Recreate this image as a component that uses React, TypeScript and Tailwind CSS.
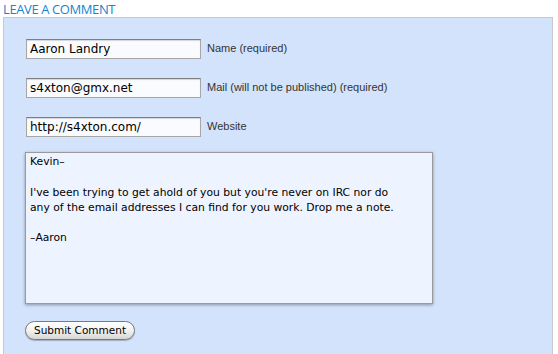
import React from "react";

export default function App() {
  const inputCls =
    "w-[175px] h-[20px] bg-[#f9fbff] border border-[#a6a6a6] border-t-[#7e7e7e] px-[3px] text-[12px] text-black outline-none shadow-[inset_0_1px_1px_rgba(0,0,0,0.15)] font-['DejaVu_Sans',sans-serif]";
  const labelCls = "text-[11px] text-[#333] ml-[6px]";
  const rows = [
    ["Aaron Landry", "Name (required)"],
    ["s4xton@gmx.net", "Mail (will not be published) (required)"],
    ["http://s4xton.com/", "Website"],
  ];
  return (
    <div className="w-[558px] h-[354px] bg-white overflow-hidden">
      <div className="pl-[3px] pt-[2px] h-[17px] text-[13px] leading-[15px] font-medium text-[#1584d2] tracking-[-0.4px] font-['Open_Sans',sans-serif]">
        LEAVE A COMMENT
      </div>
      <div className="ml-[3px] w-[550px] h-[400px] bg-[#d3e3fb] border-l border-t border-r border-[#c6c9cf] pl-[22px] pt-[20px] font-['Liberation_Sans',Arial,sans-serif]">
        <div className="flex flex-col gap-[18px]">
          {rows.map(([v, l]) => (
            <div key={l} className="flex items-center h-[21px]">
              <input readOnly value={v} className={inputCls} />
              <span className={labelCls}>{l}</span>
            </div>
          ))}
        </div>
        <div className="mt-[15px] ml-[-1px] w-[408px] h-[152px] bg-[#edf4ff] border border-[#9a9a9a] shadow-[0_1px_3px_rgba(0,0,0,0.35)] px-[4px] pt-[1px] text-[10.75px] leading-[15.3px] text-black whitespace-pre font-['DejaVu_Sans',sans-serif]">
          {"Kevin–\n\nI've been trying to get ahold of you but you're never on IRC nor do\nany of the email addresses I can find for you work. Drop me a note.\n\n–Aaron"}
        </div>
        <button className="mt-[17px] ml-[-1px] h-[19px] w-[110px] rounded-full border border-[#7a7a7a] bg-gradient-to-b from-white via-[#f2f2f2] to-[#d6d6d6] text-[10.5px] leading-[17px] text-black shadow-[0_1px_1px_rgba(0,0,0,0.25)] font-['DejaVu_Sans',sans-serif]">
          Submit Comment
        </button>
      </div>
    </div>
  );
}
